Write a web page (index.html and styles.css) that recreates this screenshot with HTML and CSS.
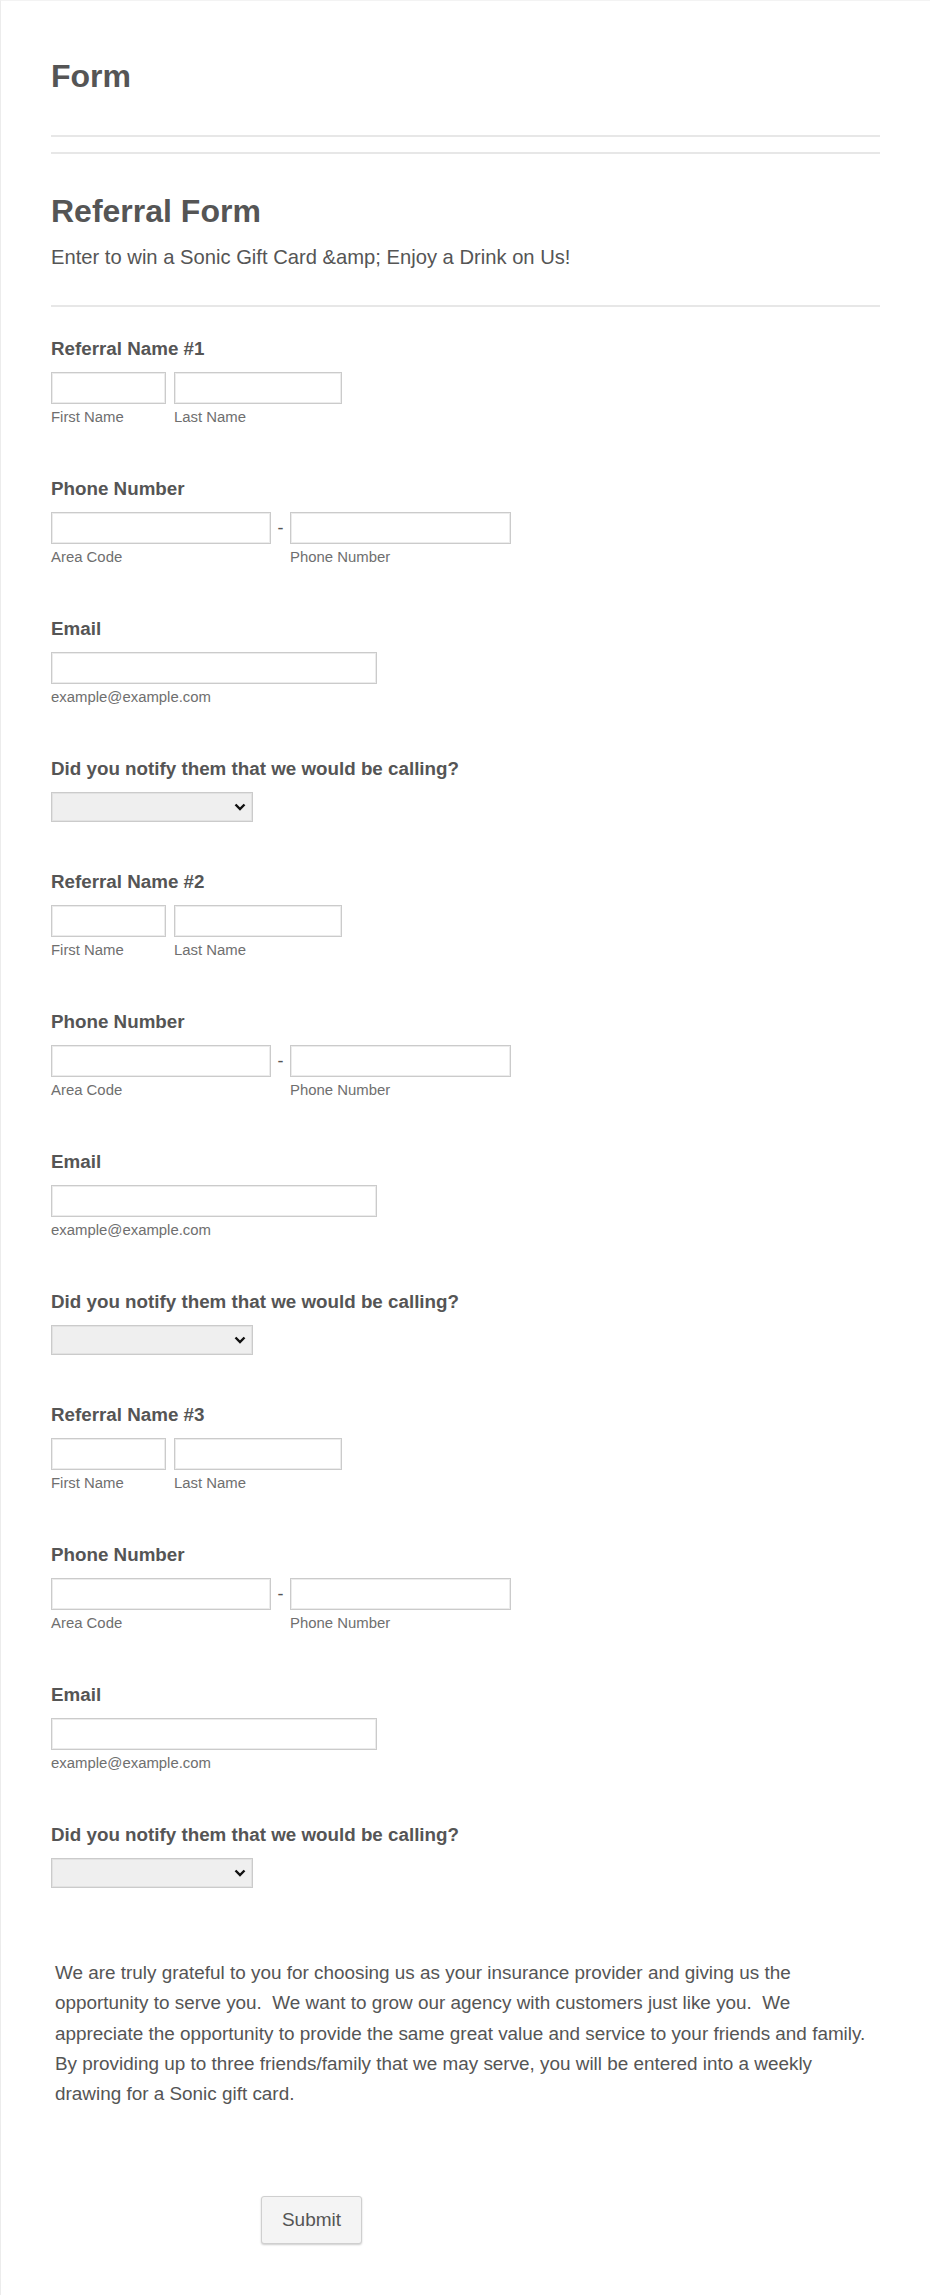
FILE: index.html
```html
<!DOCTYPE html>
<html lang="en">
<head>
<meta charset="utf-8">
<title>Referral Form</title>
<link rel="stylesheet" href="styles.css">
</head>
<body>
<div class="page">
  <div class="form-header-group first">
    <h1 class="form-title">Form</h1>
  </div>
  <div class="form-header-group second">
    <h2 class="form-title">Referral Form</h2>
    <div class="form-subheader">Enter to win a Sonic Gift Card &amp;amp; Enjoy a Drink on Us!</div>
  </div>

  <ul class="fields">
    <li class="field">
      <label class="label">Referral Name #1</label>
      <div class="row">
        <div class="sub first-name"><input class="input" type="text"><span class="sublabel">First Name</span></div>
        <div class="sub last-name"><input class="input" type="text"><span class="sublabel">Last Name</span></div>
      </div>
    </li>
    <li class="field">
      <label class="label">Phone Number</label>
      <div class="row">
        <div class="sub area"><input class="input" type="text"><span class="sublabel">Area Code</span></div>
        <span class="dash">-</span>
        <div class="sub phone"><input class="input" type="text"><span class="sublabel">Phone Number</span></div>
      </div>
    </li>
    <li class="field">
      <label class="label">Email</label>
      <div class="sub email"><input class="input" type="text"><span class="sublabel">example@example.com</span></div>
    </li>
    <li class="field select-field">
      <label class="label">Did you notify them that we would be calling?</label>
      <div class="select-wrap">
        <select class="select"><option></option></select>
        <svg class="chevron" width="12" height="8" viewBox="0 0 12 8"><path d="M1.5 1.5 L6 6 L10.5 1.5" fill="none" stroke="#111" stroke-width="2.4"/></svg>
      </div>
    </li>

    <li class="field">
      <label class="label">Referral Name #2</label>
      <div class="row">
        <div class="sub first-name"><input class="input" type="text"><span class="sublabel">First Name</span></div>
        <div class="sub last-name"><input class="input" type="text"><span class="sublabel">Last Name</span></div>
      </div>
    </li>
    <li class="field">
      <label class="label">Phone Number</label>
      <div class="row">
        <div class="sub area"><input class="input" type="text"><span class="sublabel">Area Code</span></div>
        <span class="dash">-</span>
        <div class="sub phone"><input class="input" type="text"><span class="sublabel">Phone Number</span></div>
      </div>
    </li>
    <li class="field">
      <label class="label">Email</label>
      <div class="sub email"><input class="input" type="text"><span class="sublabel">example@example.com</span></div>
    </li>
    <li class="field select-field">
      <label class="label">Did you notify them that we would be calling?</label>
      <div class="select-wrap">
        <select class="select"><option></option></select>
        <svg class="chevron" width="12" height="8" viewBox="0 0 12 8"><path d="M1.5 1.5 L6 6 L10.5 1.5" fill="none" stroke="#111" stroke-width="2.4"/></svg>
      </div>
    </li>

    <li class="field">
      <label class="label">Referral Name #3</label>
      <div class="row">
        <div class="sub first-name"><input class="input" type="text"><span class="sublabel">First Name</span></div>
        <div class="sub last-name"><input class="input" type="text"><span class="sublabel">Last Name</span></div>
      </div>
    </li>
    <li class="field">
      <label class="label">Phone Number</label>
      <div class="row">
        <div class="sub area"><input class="input" type="text"><span class="sublabel">Area Code</span></div>
        <span class="dash">-</span>
        <div class="sub phone"><input class="input" type="text"><span class="sublabel">Phone Number</span></div>
      </div>
    </li>
    <li class="field">
      <label class="label">Email</label>
      <div class="sub email"><input class="input" type="text"><span class="sublabel">example@example.com</span></div>
    </li>
    <li class="field select-field">
      <label class="label">Did you notify them that we would be calling?</label>
      <div class="select-wrap">
        <select class="select"><option></option></select>
        <svg class="chevron" width="12" height="8" viewBox="0 0 12 8"><path d="M1.5 1.5 L6 6 L10.5 1.5" fill="none" stroke="#111" stroke-width="2.4"/></svg>
      </div>
    </li>
  </ul>

  <p class="text">We are truly grateful to you for choosing us as your insurance provider and giving us the opportunity to serve you.&nbsp; We want to grow our agency with customers just like you.&nbsp; We appreciate the opportunity to provide the same great value and service to your friends and family.&nbsp; By providing up to three friends/family that we may serve, you will be entered into a weekly drawing for a Sonic gift card.</p>

  <div class="buttons">
    <button class="submit" type="button">Submit</button>
  </div>
</div>
</body>
</html>
```
FILE: styles.css
```css
* { box-sizing: border-box; }
html, body { margin: 0; padding: 0; background: #fff; }
body {
  font-family: "Liberation Sans", Arial, sans-serif;
  color: #555;
}
.page {
  border-left: 1px solid #ececec;
  border-top: 1px solid #f3f3f3;
  padding: 0 50px 50px 50px;
  min-height: 2295px;
}
.form-header-group.first {
  padding-top: 56px;
  padding-bottom: 40px;
  border-bottom: 2px solid #e7e7e7;
}
.form-header-group.second {
  margin-top: 15px;
  border-top: 2px solid #e7e7e7;
  border-bottom: 2px solid #e7e7e7;
  padding-top: 38px;
  padding-bottom: 36px;
}
.form-title {
  margin: 0;
  font-size: 32px;
  line-height: 38px;
  font-weight: bold;
  color: #555;
}
.form-subheader {
  margin-top: 15px;
  font-size: 20.2px;
  line-height: 24px;
  color: #555;
}
.fields {
  list-style: none;
  margin: 31px 0 0 0;
  padding: 0;
}
.field { margin-bottom: 52px; }
.field.select-field { margin-bottom: 49px; }
.label {
  display: block;
  font-size: 18.8px;
  line-height: 22px;
  font-weight: bold;
  color: #555;
  margin-bottom: 12px;
}
.row { display: flex; align-items: flex-start; }
.sub { display: flex; flex-direction: column; }
.first-name { width: 115px; margin-right: 8px; }
.last-name { width: 168px; }
.area { width: 220px; }
.phone { width: 221px; }
.email { width: 326px; }
.dash {
  width: 19px;
  text-align: center;
  font-size: 18px;
  line-height: 32px;
  color: #555;
}
.input {
  display: block;
  width: 100%;
  height: 32px;
  margin: 0;
  border: 1px solid #cbcbcb;
  box-shadow: inset 0 0 0 1px #ececec;
  background: #fff;
  border-radius: 0;
  font-family: inherit;
}
.sublabel {
  display: block;
  margin-top: 4px;
  font-size: 14.9px;
  line-height: 18px;
  color: #6f6f6f;
  white-space: nowrap;
}
.select-wrap {
  position: relative;
  width: 202px;
  height: 30px;
}
.select {
  -webkit-appearance: none;
  appearance: none;
  display: block;
  width: 100%;
  height: 30px;
  margin: 0;
  border: 1px solid #cbcbcb;
  box-shadow: inset 0 0 0 1px #e2e2e2;
  background: #efefef;
  border-radius: 0;
}
.chevron {
  position: absolute;
  right: 7px;
  top: 11px;
  pointer-events: none;
}
.text {
  margin: 70px 0 0 0;
  padding-left: 4px;
  padding-right: 8px;
  font-size: 18.9px;
  line-height: 30.3px;
  color: #555;
}
.buttons {
  margin-top: 87px;
  padding-left: 210px;
}
.submit {
  width: 101px;
  height: 48px;
  border: 1px solid #cfcfcf;
  border-radius: 3px;
  background: #f4f4f4;
  box-shadow: 0 1px 2px rgba(0,0,0,0.2);
  font-family: "Liberation Sans", Arial, sans-serif;
  font-size: 19px;
  color: #555;
  padding: 0;
}
```
